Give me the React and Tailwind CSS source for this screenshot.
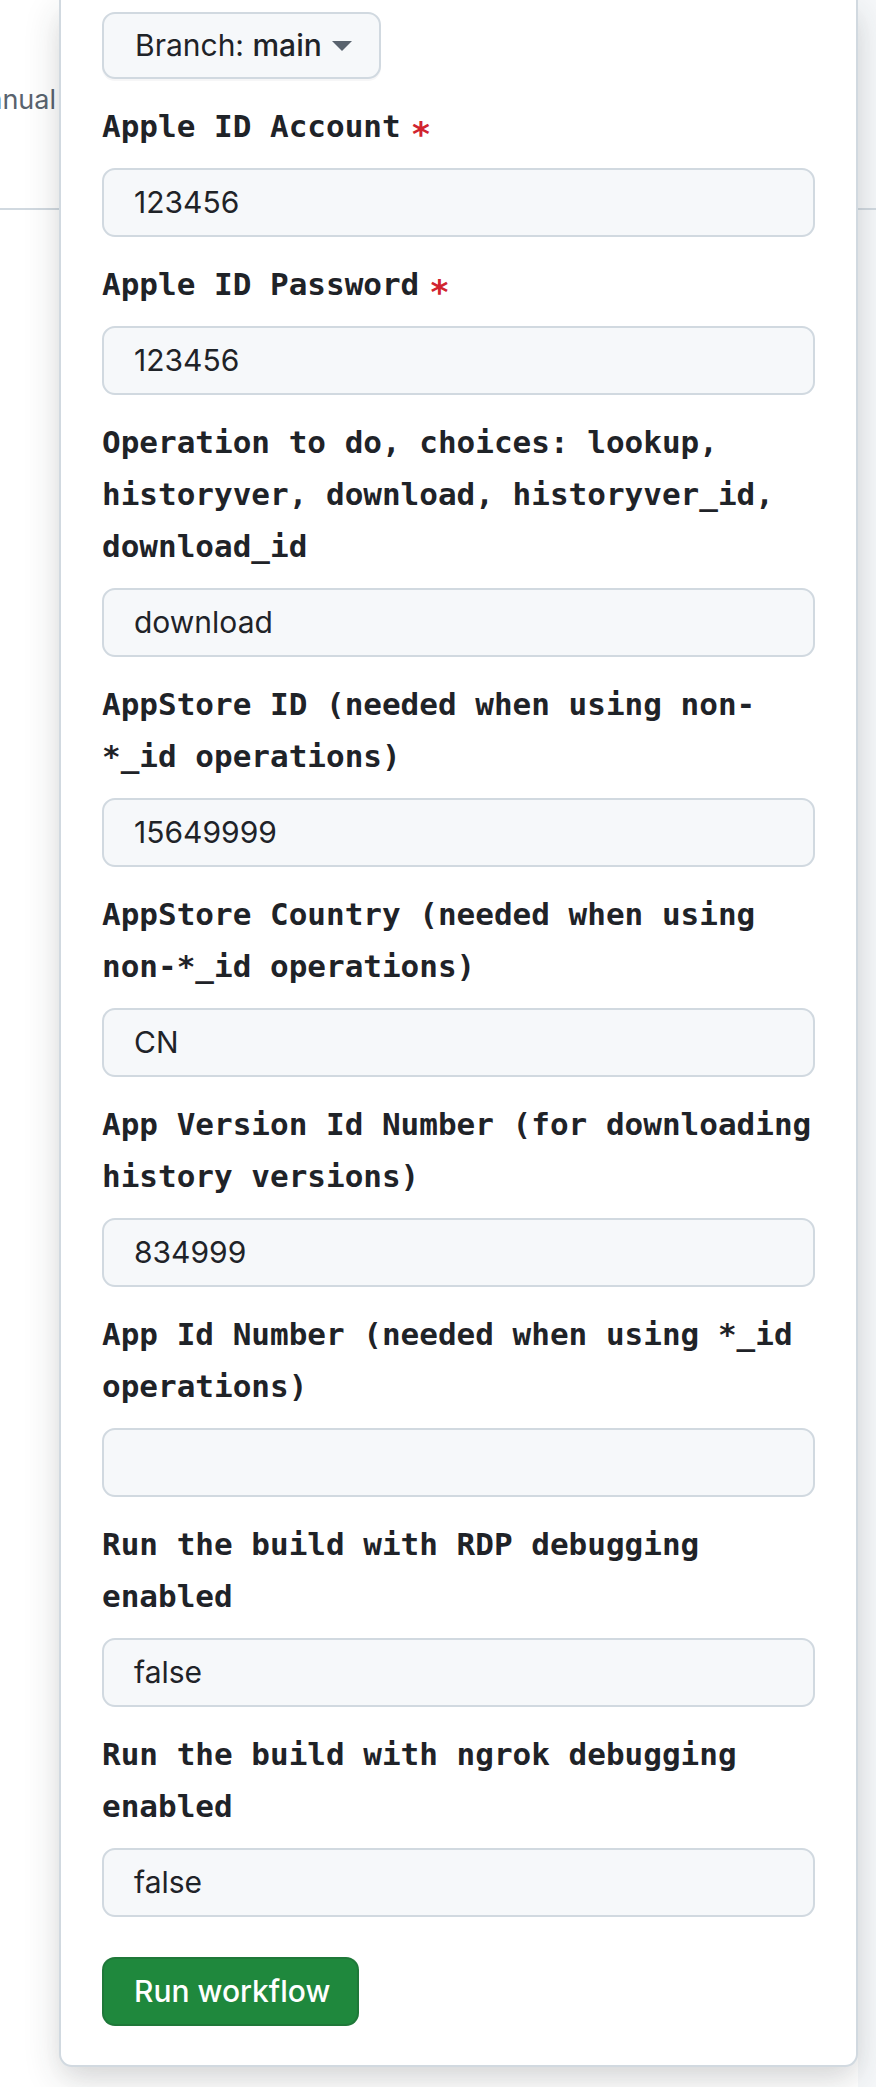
// App.jsx — "Run workflow" popover (GitHub Actions, manual dispatch)

import React from 'react';

const fields = [
  { label: 'Apple ID Account', required: true, value: '123456' },
  { label: 'Apple ID Password', required: true, value: '123456' },
  { label: 'Operation to do, choices: lookup, historyver, download, historyver_id, download_id', value: 'download' },
  { label: 'AppStore ID (needed when using non-*_id operations)', value: '15649999' },
  { label: 'AppStore Country (needed when using non-*_id operations)', value: 'CN' },
  { label: 'App Version Id Number (for downloading history versions)', value: '834999' },
  { label: 'App Id Number (needed when using *_id operations)', value: '' },
  { label: 'Run the build with RDP debugging enabled', value: 'false' },
  { label: 'Run the build with ngrok debugging enabled', value: 'false' },
];

const Caret = () => (
  <svg width="20" height="10" viewBox="0 0 20 10" className="shrink-0">
    <path d="M0 0 L20 0 L10 10 Z" fill="#59636e" />
  </svg>
);

const Field = ({ label, required, value }) => (
  <div className="mt-[21px]">
    <label className="block font-['DejaVu_Sans_Mono',monospace] font-bold text-[31px] leading-[52px] text-[#1f2328]">
      {label}
      {required && <span className="relative top-[9px] ml-[10px] text-[34px] leading-none text-[#d1242f]">*</span>}
    </label>
    <div className="mt-[16px] h-[69px] flex items-center px-[30px] bg-[#f6f8fa] border-2 border-[#d1d9e0] rounded-[13px] text-[30px] text-[#1f2328]">
      {value}
    </div>
  </div>
);

export default function App() {
  return (
    <div className="relative w-[876px] h-[2087px] overflow-hidden bg-white font-['Inter',sans-serif]">
      {/* Page behind the popover */}
      <div className="flex h-[210px] border-b-2 border-[#d1d9e0]">
        <div className="w-[56px] flex justify-end pt-[80px]">
          <span className="whitespace-nowrap text-[27px] leading-[40px] text-[#59636e]">Manual</span>
        </div>
        <div className="flex-1" />
        <div className="w-[18px] bg-[#f6f8fa]" />
      </div>
      <div className="flex h-[1877px]">
        <div className="flex-1" />
        <div className="w-[18px] bg-[#f6f8fa]" />
      </div>

      {/* Popover */}
      <div className="absolute left-[59px] top-0 w-[799px] bg-white border-2 border-t-0 border-[#d1d9e0] rounded-b-[13px] shadow-[0_12px_36px_rgba(37,41,46,0.16),0_12px_24px_-6px_rgba(37,41,46,0.06)] px-[41px] pt-[12px] pb-[39px]">
        <button className="h-[67px] w-[279px] flex items-center gap-[10px] px-[31px] bg-[#f6f8fa] border-2 border-[#d1d9e0] rounded-[13px] text-[30px] text-[#1f2328] shadow-[0_2px_0_rgba(31,35,40,0.04)]">
          <span className="whitespace-nowrap">
            Branch: <span className="font-medium">main</span>
          </span>
          <Caret />
        </button>

        {fields.map((f) => (
          <Field key={f.label} {...f} />
        ))}

        <button className="mt-[40px] h-[69px] w-[257px] flex items-center px-[30px] bg-[#1f883d] border-2 border-[rgba(31,35,40,0.15)] rounded-[13px] text-[30px] font-medium text-white whitespace-nowrap">
          Run workflow
        </button>
      </div>
    </div>
  );
}
